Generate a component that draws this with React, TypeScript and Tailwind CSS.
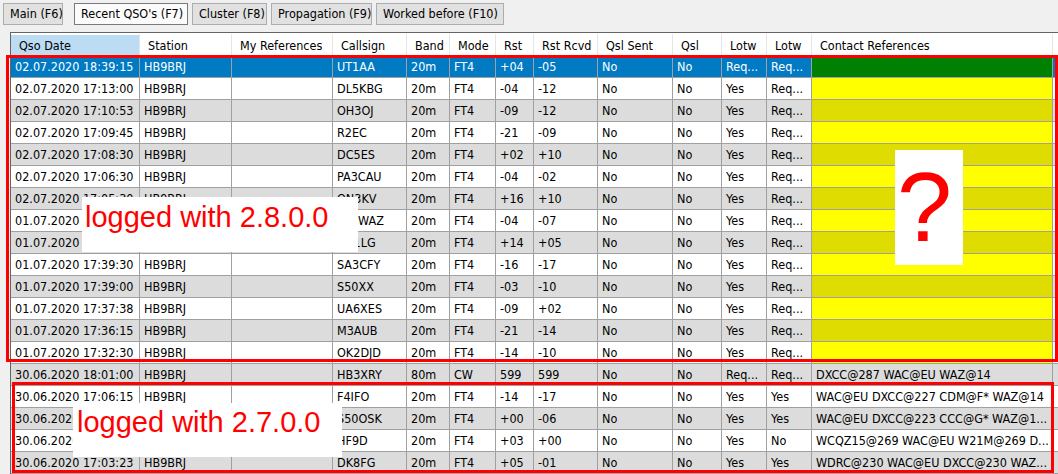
import React from 'react'

// ─── Column layout (px widths incl. 1px right grid line) ─────────
const cols = [
  { title: 'Qso Date', w: 'w-[129px]' },
  { title: 'Station', w: 'w-[92px]' },
  { title: 'My References', w: 'w-[101px]' },
  { title: 'Callsign', w: 'w-[74px]' },
  { title: 'Band', w: 'w-[43px]' },
  { title: 'Mode', w: 'w-[46px]' },
  { title: 'Rst', w: 'w-[38px]' },
  { title: 'Rst Rcvd', w: 'w-[64px]' },
  { title: 'Qsl Sent', w: 'w-[75px]' },
  { title: 'Qsl', w: 'w-[49px]' },
  { title: 'Lotw', w: 'w-[45px]' },
  { title: 'Lotw', w: 'w-[45px]' },
  { title: 'Contact References', w: 'w-[241px]' },
]

type Qso = [string, string, string, string, string, string, string, string, string, string]

// date, call, band, mode, rst, rcvd, qsl sent, qsl, lotw, lotw, refs
const rows: (Qso | [...Qso, string])[] = [
  ['02.07.2020 18:39:15', 'UT1AA', '20m', 'FT4', '+04', '-05', 'No', 'No', 'Req...', 'Req...'],
  ['02.07.2020 17:13:00', 'DL5KBG', '20m', 'FT4', '-04', '-12', 'No', 'No', 'Yes', 'Req...'],
  ['02.07.2020 17:10:53', 'OH3OJ', '20m', 'FT4', '-09', '-12', 'No', 'No', 'Yes', 'Req...'],
  ['02.07.2020 17:09:45', 'R2EC', '20m', 'FT4', '-21', '-09', 'No', 'No', 'Yes', 'Req...'],
  ['02.07.2020 17:08:30', 'DC5ES', '20m', 'FT4', '+02', '+10', 'No', 'No', 'Yes', 'Req...'],
  ['02.07.2020 17:06:30', 'PA3CAU', '20m', 'FT4', '-04', '-02', 'No', 'No', 'Yes', 'Req...'],
  ['02.07.2020 17:05:30', 'ON3KV', '20m', 'FT4', '+16', '+10', 'No', 'No', 'Yes', 'Req...'],
  ['01.07.2020 17:45:00', 'SP9WAZ', '20m', 'FT4', '-04', '-07', 'No', 'No', 'Yes', 'Req...'],
  ['01.07.2020 17:42:15', 'OZ1LG', '20m', 'FT4', '+14', '+05', 'No', 'No', 'Yes', 'Req...'],
  ['01.07.2020 17:39:30', 'SA3CFY', '20m', 'FT4', '-16', '-17', 'No', 'No', 'Yes', 'Req...'],
  ['01.07.2020 17:39:00', 'S50XX', '20m', 'FT4', '-03', '-10', 'No', 'No', 'Yes', 'Req...'],
  ['01.07.2020 17:37:38', 'UA6XES', '20m', 'FT4', '-09', '+02', 'No', 'No', 'Yes', 'Req...'],
  ['01.07.2020 17:36:15', 'M3AUB', '20m', 'FT4', '-21', '-14', 'No', 'No', 'Yes', 'Req...'],
  ['01.07.2020 17:32:30', 'OK2DJD', '20m', 'FT4', '-14', '-10', 'No', 'No', 'Yes', 'Req...'],
  ['30.06.2020 18:01:00', 'HB3XRY', '80m', 'CW', '599', '599', 'No', 'No', 'Req...', 'Req...', 'DXCC@287 WAC@EU WAZ@14'],
  ['30.06.2020 17:06:15', 'F4IFO', '20m', 'FT4', '-14', '-17', 'No', 'No', 'Yes', 'Yes', 'WAC@EU DXCC@227 CDM@F* WAZ@14'],
  ['30.06.2020 17:05:00', 'S50OSK', '20m', 'FT4', '+00', '-06', 'No', 'No', 'Yes', 'Yes', 'WAC@EU DXCC@223 CCC@G* WAZ@1...'],
  ['30.06.2020 17:04:10', 'HF9D', '20m', 'FT4', '+03', '+00', 'No', 'No', 'Yes', 'No', 'WCQZ15@269 WAC@EU W21M@269 D...'],
  ['30.06.2020 17:03:23', 'DK8FG', '20m', 'FT4', '+05', '-01', 'No', 'No', 'Yes', 'Yes', 'WDRC@230 WAC@EU DXCC@230 WAZ...'],
]

const tabs = [
  { label: 'Main (F6)', w: 'w-[60px]', active: false },
  { label: "Recent QSO's (F7)", w: 'w-[114px]', active: true },
  { label: 'Cluster (F8)', w: 'w-[75px]', active: false },
  { label: 'Propagation (F9)', w: 'w-[101px]', active: false },
  { label: 'Worked before (F10)', w: 'w-[128px]', active: false },
]

function Row({ r, index }: { r: string[]; index: number }) {
  const selected = index === 0
  const gray = index % 2 === 0
  const rowBg = selected ? 'bg-[#007ac3] text-white' : gray ? 'bg-[#dcdcdc]' : 'bg-white'
  const refs = r[10]
  const refBg = selected
    ? 'bg-[#008000]'
    : refs
      ? ''
      : gray
        ? 'bg-[#dedc00]'
        : 'bg-[#ffff00]'

  const cells = [r[0], 'HB9BRJ', '', ...r.slice(1, 10)]

  return (
    <div className={`flex h-[22px] border-b border-[#a0a0a0] ${rowBg}`}>
      {cells.map((c, i) => (
        <div
          key={i}
          className={`${cols[i].w} shrink-0 h-[21px] leading-[21px] px-[4px] border-r border-[#a0a0a0] whitespace-nowrap overflow-hidden`}
        >
          {c}
        </div>
      ))}
      <div
        className={`${cols[12].w} shrink-0 h-[21px] leading-[21px] px-[4px] border-r border-[#a0a0a0] whitespace-nowrap overflow-hidden ${refBg}`}
      >
        {refs ?? ''}
      </div>
      <div className="flex-1" />
    </div>
  )
}

export default function App() {
  return (
    <div className="relative w-[1058px] h-[474px] overflow-hidden bg-[#f0f0f0] text-[12.5px] text-black font-['DejaVu_Sans_Condensed','Liberation_Sans',sans-serif]">
      {/* Tabs */}
      <div className="flex items-start h-[32px] pl-[3px] pt-[3px]">
        {tabs.map((t, i) => (
          <div
            key={t.label}
            className={`${t.w} h-[22px] flex items-center pl-[6px] whitespace-nowrap border ${
              t.active
                ? 'bg-[#fbfbfb] border-[#7a7a7a] ml-[7px] mr-[4px]'
                : 'bg-[#e1e1e1] border-[#adadad] mr-[4px]'
            } ${i === 0 ? 'ml-0' : ''}`}
          >
            {t.label}
          </div>
        ))}
      </div>

      {/* Grid */}
      <div className="ml-[10px] border-l border-t border-[#646464] bg-white">
        <div className="flex h-[23px] bg-white">
          {cols.map((c, i) => (
            <div
              key={i}
              className={`${c.w} shrink-0 h-[23px] leading-[21px] pl-[8px] border-r border-[#e5e5e5] border-t-2 border-t-white whitespace-nowrap ${
                i === 0 ? 'bg-[#bcdcf4]' : ''
              }`}
            >
              {c.title}
            </div>
          ))}
          <div className="flex-1" />
        </div>
        {rows.map((r, i) => (
          <Row key={i} r={r as string[]} index={i} />
        ))}
      </div>

      {/* Annotations drawn over the grid */}
      <div className="absolute left-[6px] top-[55px] w-[1052px] h-[307px] border-[3px] border-[#ff0000] pointer-events-none" />
      <div className="absolute left-[12px] top-[382px] w-[1042px] h-[91px] border-[3px] border-[#ff0000] pointer-events-none" />

      <div className="absolute left-[82px] top-[197px] w-[276px] h-[55px] bg-white pl-[3px] pt-[6px] text-[29px] leading-[29px] text-[#ff0000] font-['Liberation_Sans',Arial,sans-serif]">
        logged with 2.8.0.0
      </div>
      <div className="absolute left-[73px] top-[403px] w-[269px] h-[54px] bg-white pl-[4px] pt-[5px] text-[29px] leading-[29px] text-[#ff0000] font-['Liberation_Sans',Arial,sans-serif]">
        logged with 2.7.0.0
      </div>
      <div className="absolute left-[895px] top-[150px] w-[68px] h-[115px] bg-white pr-[9px] pt-[7px] text-center text-[99px] leading-[99px] text-[#ff0000] font-['Liberation_Sans',Arial,sans-serif]">
        ?
      </div>
    </div>
  )
}
